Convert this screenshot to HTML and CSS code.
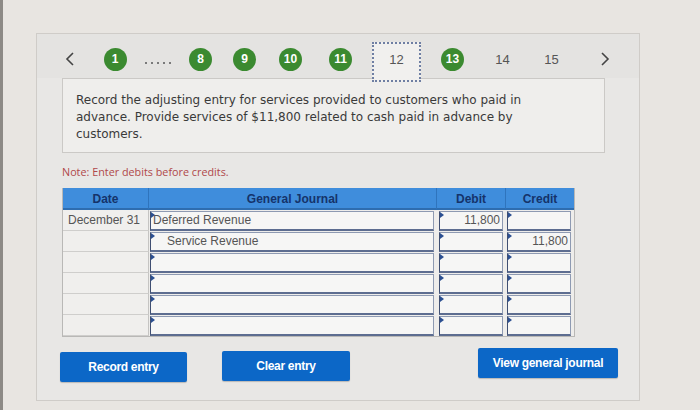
FILE: index.html
```html
<!DOCTYPE html>
<html>
<head>
<meta charset="utf-8">
<link rel="stylesheet" href="styles.css">
</head>
<body>
<div class="screen">
  <div class="panel">
    <div class="nav">
      <div class="cell"><svg class="chev" width="10" height="14" viewBox="0 0 10 14"><polyline points="8,1 2,7 8,13" fill="none" stroke="#444" stroke-width="1.6"/></svg></div>
      <div class="cell"><span class="dot">1</span></div>
      <div class="cell"><span class="dots"><i></i><i></i><i></i><i></i><i></i></span></div>
      <div class="cell"><span class="dot">8</span></div>
      <div class="cell"><span class="dot">9</span></div>
      <div class="cell"><span class="dot">10</span></div>
      <div class="cell"><span class="dot">11</span></div>
      <div class="cell top"><span class="current">12</span></div>
      <div class="cell"><span class="dot">13</span></div>
      <div class="cell"><span class="plain">14</span></div>
      <div class="cell"><span class="plain">15</span></div>
      <div class="cell"><svg class="chev" width="10" height="14" viewBox="0 0 10 14"><polyline points="2,1 8,7 2,13" fill="none" stroke="#444" stroke-width="1.6"/></svg></div>
    </div>
    <div class="content">
      <div class="question">Record the adjusting entry for services provided to customers who paid in advance. Provide services of $11,800 related to cash paid in advance by customers.</div>
      <div class="note">Note: Enter debits before credits.</div>
      <div class="journal">
        <div class="th">Date</div>
        <div class="th">General Journal</div>
        <div class="th">Debit</div>
        <div class="th">Credit</div>

        <div class="date">December 31</div>
        <div class="td"><div class="field">Deferred Revenue</div></div>
        <div class="td"><div class="field num">11,800</div></div>
        <div class="td"><div class="field num"></div></div>

        <div class="date"></div>
        <div class="td"><div class="field indent">Service Revenue</div></div>
        <div class="td"><div class="field num"></div></div>
        <div class="td"><div class="field num">11,800</div></div>

        <div class="date"></div>
        <div class="td"><div class="field"></div></div>
        <div class="td"><div class="field"></div></div>
        <div class="td"><div class="field"></div></div>

        <div class="date"></div>
        <div class="td"><div class="field"></div></div>
        <div class="td"><div class="field"></div></div>
        <div class="td"><div class="field"></div></div>

        <div class="date"></div>
        <div class="td"><div class="field"></div></div>
        <div class="td"><div class="field"></div></div>
        <div class="td"><div class="field"></div></div>

        <div class="date"></div>
        <div class="td"><div class="field"></div></div>
        <div class="td"><div class="field"></div></div>
        <div class="td"><div class="field"></div></div>
      </div>
      <div class="buttons">
        <button class="btn rec">Record entry</button>
        <button class="btn clr">Clear entry</button>
        <button class="btn view">View general journal</button>
      </div>
    </div>
  </div>
</div>
</body>
</html>
```
FILE: styles.css
```css
html, body {
  margin: 0;
  padding: 0;
}
body {
  width: 700px;
  height: 410px;
  overflow: hidden;
  background: #e8e5e1;
  font-family: "Liberation Sans", Arial, sans-serif;
}
.screen {
  padding: 33px 0 0 36px;
  border-left: 3px solid #8d8a86;
  box-sizing: border-box;
  height: 410px;
}
.panel {
  width: 604px;
  height: 368px;
  margin-left: -3px;
  border: 1px solid #cfccc8;
  background: #e8e7e5;
  box-sizing: border-box;
}
.nav {
  height: 44px;
  padding-left: 9px;
  display: grid;
  grid-template-columns: 47px 44px 42px 43px 45px 47px 53px 59px 53px 47px 51px 56px;
  align-items: center;
  background: #e4e3e1;
}
.cell {
  display: flex;
  justify-content: center;
  align-items: center;
  height: 44px;
  padding-top: 6px;
  box-sizing: border-box;
}
.cell.top {
  align-items: flex-start;
  padding-top: 8px;
}
.chev { display: block; }
.dot {
  width: 23px;
  height: 23px;
  border-radius: 50%;
  background: #3b8a30;
  color: #fff;
  font-weight: bold;
  font-size: 12px;
  display: flex;
  align-items: center;
  justify-content: center;
}
.dots {
  display: flex;
  gap: 4px;
  padding-top: 8px;
}
.dots i {
  width: 2px;
  height: 2px;
  background: #7a7a7a;
  display: block;
}
.current {
  width: 49px;
  height: 40px;
  box-sizing: border-box;
  border: 2px dotted #6f7fa3;
  background: #f1f0ee;
  color: #555;
  font-size: 13px;
  text-align: center;
  padding-top: 8px;
  position: relative;
  z-index: 1;
}
.plain {
  color: #555;
  font-size: 13px;
}
.content {
  padding-left: 25px;
}
.question {
  width: 543px;
  height: 75px;
  box-sizing: border-box;
  border: 1px solid #cbc9c6;
  background: #efeeec;
  padding: 13px 58px 13px 13px;
  font-family: "DejaVu Sans", Verdana, sans-serif;
  font-size: 12px;
  line-height: 17px;
  color: #3a3a3a;
}
.note {
  margin-top: 11px;
  font-family: "Open Sans", sans-serif;
  font-size: 10.8px;
  color: #b0474a;
  height: 15px;
  line-height: 15px;
}
.journal {
  margin-top: 9px;
  width: 511px;
  display: grid;
  grid-template-columns: 86px 288px 69px 68px;
  grid-auto-rows: 21px;
  grid-template-rows: 22px;
  border: 1px solid #b9b8b6;
  border-top: none;
  background: #eeedeb;
}
.th {
  background: #3f8ddc;
  color: #15336a;
  font-size: 12px;
  font-weight: bold;
  text-align: center;
  line-height: 22px;
  border-right: 1px solid #2f74bd;
  border-bottom: 2px solid #2e6db0;
  box-sizing: border-box;
}
.th:nth-child(4) { border-right: none; }
.date {
  border-right: 1px solid #c5c4c2;
  border-bottom: 1px solid #cfcecc;
  font-size: 12px;
  color: #555;
  line-height: 20px;
  padding-left: 5px;
  box-sizing: border-box;
  white-space: nowrap;
  background: #f0efed;
}
.td {
  padding: 1px 3px 0 1px;
  box-sizing: border-box;
}
.td:nth-child(4n+3) { padding-left: 2px; }
.field {
  position: relative;
  height: 20px;
  box-sizing: border-box;
  border: 1px solid #8e9ab2;
  border-left: 1px solid #3f4f72;
  border-bottom: 2px solid #5d6d90;
  background: #f6f6f5;
  font-size: 12px;
  color: #555;
  line-height: 17px;
  padding: 0 2px;
  white-space: nowrap;
}
.field::before {
  content: "";
  position: absolute;
  left: 0;
  top: 0;
  border-top: 3px solid transparent;
  border-bottom: 3px solid transparent;
  border-left: 4px solid #2b4f91;
}
.field.indent { padding-left: 16px; }
.field.num { text-align: right; }
.buttons {
  display: flex;
  align-items: flex-start;
  margin-top: 13px;
}
.btn {
  height: 30px;
  border: none;
  border-radius: 2px;
  background: #0c67c7;
  color: #fff;
  font-family: "Liberation Sans", Arial, sans-serif;
  font-weight: bold;
  font-size: 12px;
  letter-spacing: -0.3px;
  box-shadow: 0 1px 1px rgba(0,0,0,0.2);
  padding: 0;
}
.rec { width: 127px; margin-left: -2px; margin-top: 2px; }
.clr { width: 128px; margin-left: 35px; margin-top: 1px; }
.view { width: 140px; margin-left: 128px; margin-top: -2px; }
```
